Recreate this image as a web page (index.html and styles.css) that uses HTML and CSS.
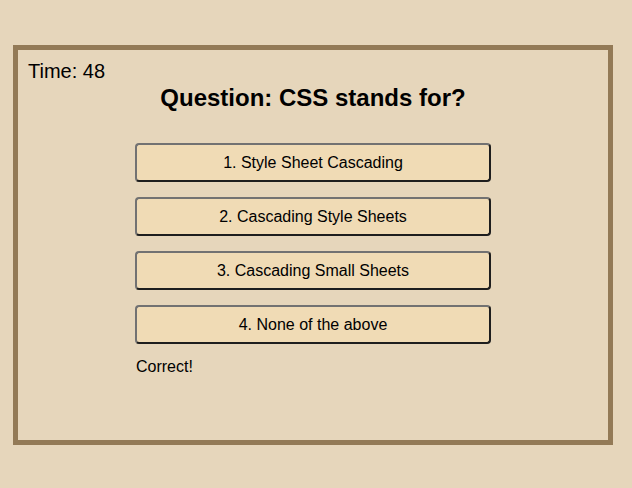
FILE: index.html
```html
<!DOCTYPE html>
<html>
<head>
<meta charset="utf-8">
<link rel="stylesheet" href="styles.css">
</head>
<body>
<div class="quiz">
  <div class="timer">Time: 48</div>
  <h2 class="question">Question: CSS stands for?</h2>
  <div class="answers">
    <button class="answer">1. Style Sheet Cascading</button>
    <button class="answer">2. Cascading Style Sheets</button>
    <button class="answer">3. Cascading Small Sheets</button>
    <button class="answer">4. None of the above</button>
    <div class="feedback">Correct!</div>
  </div>
</div>
</body>
</html>
```

FILE: styles.css
```css
html, body {
  margin: 0;
  padding: 0;
  background: #e6d6bb;
  font-family: "Liberation Sans", Arial, sans-serif;
  color: #000;
}
body {
  padding: 45px 0 0 13px;
}
.quiz {
  box-sizing: border-box;
  width: 600px;
  height: 400px;
  border: 5px solid #937a56;
  padding: 10px 10px 0 10px;
}
.timer {
  font-size: 20px;
  line-height: 23px;
}
.question {
  margin: 0;
  padding-top: 1px;
  font-size: 24px;
  font-weight: bold;
  line-height: 28px;
  text-align: center;
}
.answers {
  width: 356px;
  margin: 31px auto 0;
  display: flex;
  flex-direction: column;
  gap: 15px;
}
.answer {
  box-sizing: border-box;
  height: 39px;
  width: 100%;
  background: #f0dbb5;
  border: 2px solid;
  border-color: #727272 #1e1e1e #1e1e1e #727272;
  border-radius: 4px;
  font-family: "Liberation Sans", Arial, sans-serif;
  font-size: 16px;
  color: #000;
  padding: 0;
}
.feedback {
  margin-top: -2px;
  padding-left: 1px;
  font-size: 16px;
  line-height: 20px;
}
```
